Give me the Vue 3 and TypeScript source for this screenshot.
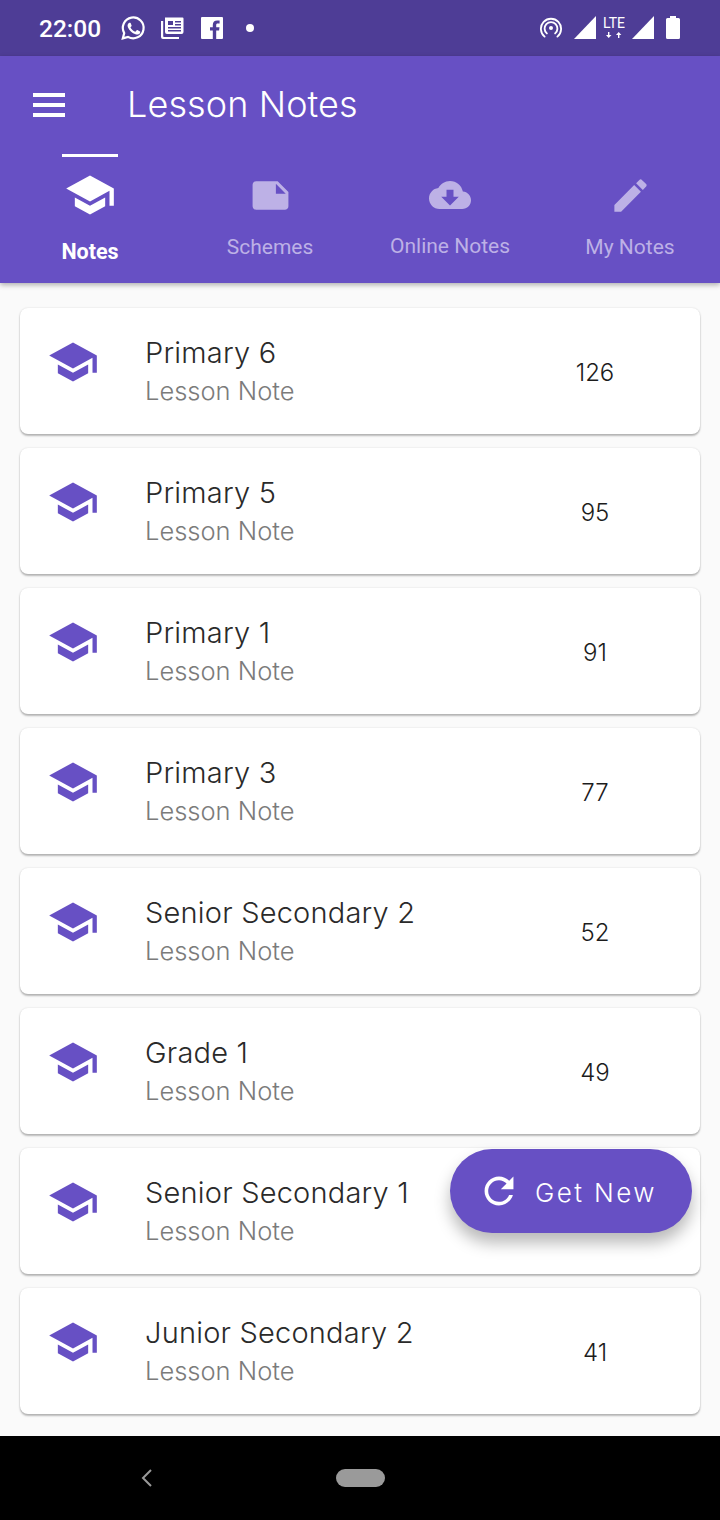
<template>
  <div class="screen">
    <header class="status-bar">
      <span class="time">22:00</span>
      <svg class="st-whatsapp" viewBox="0 0 24 24" width="26" height="26">
        <path class="outline" d="M2.600 21.600l1.300-4.900A9.600 9.600 0 1 1 7.400 20.200z" />
        <path class="solid" d="M9 7.200c-.3 0-.7.1-1 .5-.4.4-1 1-1 2.300s1 2.700 1.200 2.900c.1.200 2 3.200 5 4.300 2.400.9 2.900.7 3.400.7.600-.1 1.700-.7 1.900-1.300.2-.6.200-1.200.200-1.300-.1-.1-.3-.2-.6-.4l-2-1c-.3-.1-.5-.1-.7.2l-.9 1.100c-.2.200-.3.200-.6.100-.3-.2-1.300-.5-2.400-1.500-.9-.8-1.500-1.800-1.700-2.100-.2-.3 0-.5.100-.6l.5-.5.300-.5c.1-.2 0-.4 0-.5L9.900 7.700c-.2-.5-.5-.5-.9-.5z" />
      </svg>
      <svg class="st-news" viewBox="0 0 24 24" width="24" height="24">
        <path class="solid" d="M5 1.500h17.500a1 1 0 0 1 1 1V16a2 2 0 0 1-2 2H7a2 2 0 0 1-2-2z M8 5v4h5V5z M15 5v1.500h6V5z M15 8v1.500h6V8z M8 11v1.500h13V11z M8 14v1.500h13V14z" fill-rule="evenodd" />
        <path class="solid" d="M1 5h2.200v15.300c0 .4.300.7.700.7H19v2H3a2 2 0 0 1-2-2z" />
      </svg>
      <svg class="st-fb" viewBox="0 0 22 22" width="22" height="22">
        <path class="solid" d="M1 0h20a1 1 0 0 1 1 1v20a1 1 0 0 1-1 1h-5.800v-8.500h2.900l.4-3.300h-3.300V8.100c0-1 .3-1.600 1.600-1.600h1.800V3.600c-.3 0-1.300-.1-2.500-.1-2.500 0-4.300 1.500-4.300 4.400v2.300H9v3.300h2.800V22H1a1 1 0 0 1-1-1V1a1 1 0 0 1 1-1z" />
      </svg>
      <span class="st-dot"></span>
      <div class="status-right">
        <svg class="st-hotspot" viewBox="0 0 24 24" width="22" height="22">
          <circle class="solid" cx="12" cy="13" r="2.200" />
          <path class="arc" d="M7.500 19a7 7 0 1 1 9 0" />
          <path class="arc" d="M5 22.500a11 11 0 1 1 14 0" />
        </svg>
        <svg class="st-signal" viewBox="0 0 22 23" width="22" height="23">
          <path class="solid" d="M22 0v23H0z" />
        </svg>
        <div class="lte">
          <span>LTE</span>
          <svg viewBox="0 0 16 6" width="16" height="6">
            <path class="solid" d="M2 0h1.400v3H5.500L2.700 6 0 3h2zM12 6h1.400V3h2L12.700 0 10 3h2z" />
          </svg>
        </div>
        <svg class="st-signal" viewBox="0 0 22 23" width="22" height="23">
          <path class="solid" d="M22 0v23H0z" />
        </svg>
        <svg class="st-battery" viewBox="0 0 14 23" width="14" height="23">
          <path class="solid" d="M4 0h6v2h2.500A1.500 1.500 0 0 1 14 3.500V21.500A1.500 1.500 0 0 1 12.500 23h-11A1.500 1.500 0 0 1 0 21.500V3.500A1.500 1.500 0 0 1 1.500 2H4z" />
        </svg>
      </div>
    </header>

    <section class="app-bar">
      <div class="toolbar">
        <div class="hamburger"><i></i><i></i><i></i></div>
        <h1>Lesson Notes</h1>
      </div>
      <nav class="tabs">
        <div v-for="tab in tabs" :key="tab.label" :class="['tab', { active: tab.active }]">
          <svg :viewBox="tab.viewBox" :width="tab.size" :height="tab.size">
            <path :d="tab.icon" />
          </svg>
          <span>{{ tab.label }}</span>
        </div>
      </nav>
    </section>

    <main class="content">
      <div class="list">
        <article v-for="note in notes" :key="note.title" class="card">
          <svg class="cap" viewBox="0 0 24 24" width="52" height="52">
            <path :d="schoolIcon" />
          </svg>
          <div class="card-text">
            <div class="title">{{ note.title }}</div>
            <div class="sub">Lesson Note</div>
          </div>
          <div v-if="note.count" class="count">{{ note.count }}</div>
        </article>
      </div>
      <button class="fab">
        <svg viewBox="0 0 512 512" width="42" height="42">
          <path d="M256 388c-72.597 0-132-59.405-132-132 0-72.601 59.403-132 132-132 36.300 0 69.299 15.400 92.406 39.601L278 234h154V80l-51.698 51.702C348.406 99.798 304.406 80 256 80c-96.797 0-176 79.203-176 176s78.094 176 176 176c81.045 0 148.287-54.134 169.401-128H378.850c-18.745 49.561-67.138 84-122.850 84z" />
        </svg>
        <span>Get New</span>
      </button>
    </main>

    <footer class="nav-bar">
      <svg viewBox="0 0 12 20" width="12" height="20">
        <path d="M10 2L2 10l8 8" />
      </svg>
      <span class="pill"></span>
    </footer>
  </div>
</template>

<script setup lang="ts">
interface Tab {
  label: string;
  icon: string;
  viewBox: string;
  size: number;
  active?: boolean;
}

interface Note {
  title: string;
  count?: number; // the FAB covers one row's count
}

const schoolIcon = 'M5 13.18v4L12 21l7-3.820v-4L12 17l-7-3.820zM12 3L1 9l11 6 9-4.910V17h2V9L12 3z';

const tabs: Tab[] = [
  { label: 'Notes', icon: schoolIcon, viewBox: '0 0 24 24', size: 52, active: true },
  {
    label: 'Schemes',
    icon: 'M22 10l-6-6H4c-1.100 0-2 .9-2 2v12.010c0 1.100.9 1.990 2 1.990l16-.010c1.100 0 2-.89 2-1.990v-8zm-7-4.500l5.500 5.500H15V5.500z',
    viewBox: '0 0 24 24',
    size: 43
  },
  {
    label: 'Online Notes',
    icon: 'M19.350 10.040C18.670 6.590 15.640 4 12 4 9.110 4 6.600 5.640 5.350 8.040 2.340 8.360 0 10.910 0 14c0 3.310 2.690 6 6 6h13c2.760 0 5-2.240 5-5 0-2.640-2.050-4.780-4.650-4.960zM17 13l-5 5-5-5h3V9h4v4h3z',
    viewBox: '0 0 24 24',
    size: 42
  },
  {
    label: 'My Notes',
    icon: 'M3 17.250V21h3.750L17.810 9.940l-3.750-3.750L3 17.250zM20.710 7.040c.39-.39.39-1.020 0-1.410l-2.340-2.340c-.39-.39-1.020-.39-1.410 0l-1.830 1.830 3.750 3.750 1.830-1.830z',
    viewBox: '0 0 24 24',
    size: 43
  }
];

const notes: Note[] = [
  { title: 'Primary 6', count: 126 },
  { title: 'Primary 5', count: 95 },
  { title: 'Primary 1', count: 91 },
  { title: 'Primary 3', count: 77 },
  { title: 'Senior Secondary 2', count: 52 },
  { title: 'Grade 1', count: 49 },
  { title: 'Senior Secondary 1' },
  { title: 'Junior Secondary 2', count: 41 }
];
</script>

<style scoped>
.screen {
  display: flex;
  flex-direction: column;
  width: 720px;
  height: 1520px;
  overflow: hidden;
  background: #fafafa;
  font-family: Inter, "Liberation Sans", sans-serif;
}

.status-bar {
  display: flex;
  align-items: center;
  flex: none;
  height: 56px;
  padding: 0 40px 0 39px;
  background: #4e3d96;
  color: #fff;
}

.solid {
  fill: #fff;
}

.outline,
.arc {
  fill: none;
  stroke: #fff;
}

.outline {
  stroke-width: 2;
}

.arc {
  stroke-width: 2;
  stroke-linecap: round;
}

.time {
  font: 500 24.500px Roboto, sans-serif;
  margin-right: 19px;
}

.st-news {
  margin-left: 14px;
}

.st-fb {
  margin-left: 17px;
}

.st-dot {
  width: 8px;
  height: 8px;
  margin-left: 23px;
  border-radius: 50%;
  background: #fff;
}

.status-right {
  display: flex;
  align-items: center;
  margin-left: auto;
  margin-top: -2px;
  gap: 10px;
}

.st-hotspot {
  margin-right: 2px;
}

.st-battery {
  margin-left: 2px;
}

.lte {
  display: flex;
  flex-direction: column;
  align-items: center;
  width: 22px;
  margin: -2px -3px 0;
  font: 400 14px/16px Roboto, sans-serif;
}

.lte svg {
  margin-top: 1px;
}

.app-bar {
  flex: none;
  height: 227px;
  background: #6750c4;
  box-shadow: 0 2px 5px rgba(0, 0, 0, 0.3);
  position: relative;
  z-index: 2;
}

.toolbar {
  display: flex;
  align-items: center;
  height: 98px;
  padding-left: 33px;
}

.hamburger {
  display: flex;
  flex-direction: column;
  gap: 6px;
  width: 32px;
}

.hamburger i {
  height: 4px;
  background: #fff;
}

h1 {
  margin: 0 0 2px 62px;
  color: #fff;
  font-size: 36px;
  font-weight: 300;
  letter-spacing: 0.1px;
}

.tabs {
  display: grid;
  grid-template-columns: repeat(4, 1fr);
}

.tab {
  display: flex;
  flex-direction: column;
  align-items: center;
  height: 129px;
  color: #bdb1e6;
  font: 400 21px/24px Roboto, sans-serif;
}

.tab svg {
  display: block;
  margin-top: 20px;
  margin-bottom: 4px;
  fill: currentColor;
}

.tab span {
  margin-top: 14px;
}

.tab.active {
  position: relative;
  color: #fff;
  font-weight: 700;
  font-size: 21.500px;
}

.tab.active::before {
  content: "";
  position: absolute;
  top: 0;
  left: 62px;
  width: 56px;
  height: 3px;
  background: #fff;
}

.tab.active svg {
  margin-top: 15px;
  margin-bottom: 0;
}

.tab.active span {
  margin-top: 19px;
}

.content {
  flex: 1;
  position: relative;
  min-height: 0;
}

.list {
  display: flex;
  flex-direction: column;
  gap: 14px;
  padding: 25px 20px 0;
}

.card {
  display: grid;
  grid-template-columns: 52px 1fr 76px;
  flex: none;
  height: 126px;
  padding: 0 67px 0 27px;
  background: #fff;
  border-radius: 8px;
  box-shadow: 0 2px 2px rgba(0, 0, 0, 0.26), 0 0 2px rgba(0, 0, 0, 0.14);
  align-items: center;
}

.cap {
  align-self: start;
  margin-top: 28px;
  fill: #6750c4;
}

.card-text {
  margin-left: 46px;
  padding-top: 2px;
}

.title {
  color: #2a2a2a;
  font-size: 29px;
  font-weight: 300;
  letter-spacing: 0.2px;
  line-height: 38px;
}

.sub {
  color: #7b7b7b;
  font-size: 25.500px;
  font-weight: 300;
  line-height: 38px;
}

.count {
  padding-top: 2px;
  color: #1c1c1c;
  font-size: 24px;
  font-weight: 300;
  text-align: center;
}

.fab {
  position: absolute;
  right: 28px;
  bottom: 203px;
  display: flex;
  align-items: center;
  width: 242px;
  height: 84px;
  padding: 0 0 0 28px;
  border: 0;
  border-radius: 42px;
  background: #6750c4;
  box-shadow: 0 10px 16px rgba(0, 0, 0, 0.28);
  color: #fff;
  font-family: inherit;
  font-size: 26px;
  font-weight: 300;
  letter-spacing: 2.400px;
}

.fab span {
  padding-top: 2px;
}

.fab svg {
  fill: #fff;
  margin-right: 15px;
}

.nav-bar {
  display: flex;
  align-items: center;
  flex: none;
  height: 84px;
  padding-left: 141px;
  background: #000;
}

.nav-bar svg {
  fill: none;
  stroke: #9a9a9a;
  stroke-width: 2;
}

.pill {
  width: 49px;
  height: 18px;
  margin-left: 183px;
  border-radius: 9px;
  background: #9a9a9a;
}
</style>
